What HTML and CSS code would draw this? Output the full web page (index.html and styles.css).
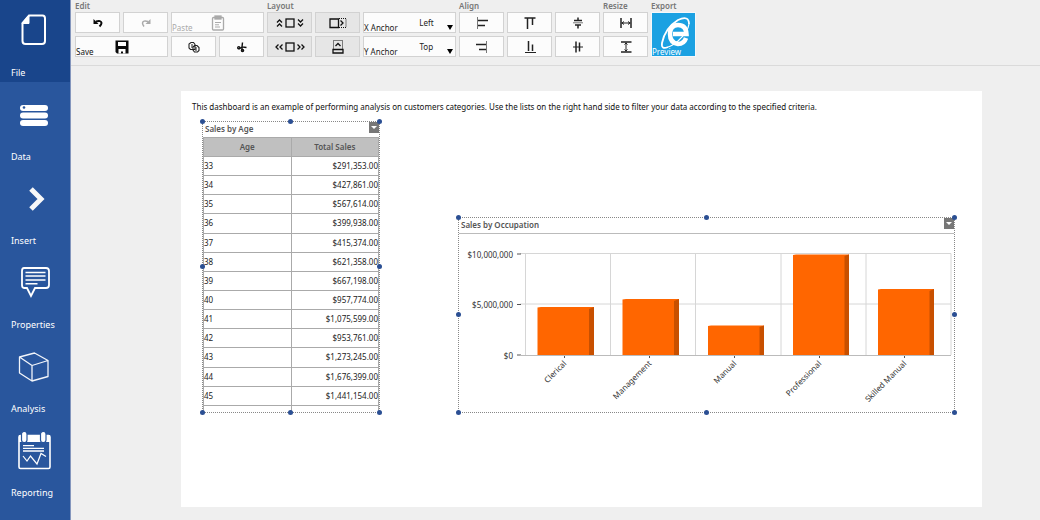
FILE: index.html
```html
<!DOCTYPE html>
<html lang="en">
<head>
<meta charset="utf-8">
<title>Dashboard designer</title>
<link rel="stylesheet" href="styles.css">
</head>
<body>
<div class="app">
  <nav class="sidebar">
    <button class="nav-item active"><svg class="nav-icon" viewBox="0 0 40 40" fill="none" stroke="#fff" stroke-width="2"><path d="M15 5.500h13.500q2.500 0 2.500 3v22.500q0 3-3 3H11.500q-3 0-3-3V13z"/><path d="M15 5v8.500H8z" fill="#fff" stroke-width="1"/></svg><span>File</span></button>
    <button class="nav-item"><svg class="nav-icon" viewBox="0 0 40 40" fill="#fff"><rect x="6" y="10" width="28" height="6" rx="3"/><rect x="6" y="17.500" width="28" height="6" rx="3"/><rect x="6" y="25" width="28" height="6" rx="3"/><circle cx="10" cy="12.500" r="1.300" fill="#29569d"/></svg><span>Data</span></button>
    <button class="nav-item"><svg class="nav-icon" viewBox="0 0 40 40" fill="none" stroke="#f8f8f8" stroke-width="5"><path d="M17 10l10 10-10 10"/></svg><span>Insert</span></button>
    <button class="nav-item"><svg class="nav-icon" viewBox="0 0 40 40" fill="none" stroke="#fff" stroke-width="1.800"><path d="M10 5h22q3 0 3 3v14q0 3-3 3h-11l-4 8-4-8h-3q-2 0-2-3V8q0-3 2-3z"/><path d="M11.500 9.500h20M11.500 13h20M11.500 17h20M11.500 20.800h12" stroke-width="1.600"/></svg><span>Properties</span></button>
    <button class="nav-item"><svg class="nav-icon" viewBox="0 0 40 40" fill="none" stroke="#f2f5fa" stroke-width="1.300" stroke-linejoin="round"><path d="M5.500 10l15-4L34 13.500v16L18 34 5.500 26zM5.500 10L18 18.500l16-5M18 18.500V34"/></svg><span>Analysis</span></button>
    <button class="nav-item"><svg class="nav-icon" viewBox="0 0 40 40" fill="none" stroke="#fff"><rect x="5" y="4.500" width="31" height="33" rx="1.500" stroke-width="1.600"/><path d="M5 4h31v7H5z" fill="#fff" stroke="none"/><g fill="#fff" stroke="#29569d" stroke-width="1.200"><rect x="7.500" y=".5" width="5.500" height="11" rx="2.500"/><rect x="26.500" y=".5" width="5.500" height="11" rx="2.500"/></g><path d="M9 14.700h11M9 17.300h21M9 20h21" stroke-width="1.300"/><path d="M9 25l4 5 3.500-5 6.500 8 4-10.500 5 3" stroke-width="1.200"/></svg><span>Reporting</span></button>
  </nav>
  <div class="workspace">
    <header class="toolbar">
      <section class="group edit"><h2>Edit</h2><div class="tools">
        <button class="tool" aria-label="Undo"><svg class="icon" viewBox="0 0 16 16" fill="none" stroke="#0a0a0a" stroke-width="2"><path d="M6 6.500q5-1.500 5.500 1.500 0 1.500-2 3.500"/><path d="M3.500 4v5h5z" fill="#0a0a0a" stroke="none"/></svg></button>
        <button class="tool" aria-label="Redo"><svg class="icon" viewBox="0 0 16 16" fill="none" stroke="#aaa" stroke-width="1.500"><path d="M10 6.500Q5 5 4.500 8q0 1.500 1.500 3.500"/><path d="M12.500 4v5h-5z" fill="#aaa" stroke="none"/></svg></button>
        <button class="tool wide" disabled><span class="caption">Paste</span><svg class="icon" viewBox="0 0 16 16" fill="none" stroke="#aaa" stroke-width="1.300"><rect x="2.500" y="2.500" width="11" height="12.500" rx="1"/><rect x="5" y="1" width="6" height="3" fill="#aaa"/><path d="M5 7.500h6M5 9.800h4M5 12h5" stroke-width="1"/></svg></button>
        <button class="tool wide"><span class="caption">Save</span><svg class="icon" viewBox="0 0 16 16"><path d="M1.500 1.500h13v13H3L1.500 13z" fill="#0a0a0a"/><path d="M4 3h8v4H4zM4.500 10h7v4.500H9V12.500H7v2H4.500z" fill="#fff"/></svg></button>
        <button class="tool" aria-label="Copy"><svg class="icon" viewBox="0 0 16 16" fill="#fff" stroke="#222" stroke-width="1.100"><path d="M5 3.500h2.500l1.500 2v5H4.500L3 9V5zM8.500 6.500h2.500l2 2v3l-1.500 1.500h-3L7 11V8z"/><path d="M5 6h2M5 8h2M9 9h2M9 11h2"/></svg></button>
        <button class="tool" aria-label="Cut"><svg class="icon" viewBox="0 0 16 16" fill="none" stroke="#111" stroke-width="1.400"><path d="M8.500 3.500L8 8l4.500.5M8 8L5 10M8 8v4"/><circle cx="4.800" cy="8.700" r="1.100"/><circle cx="8.500" cy="11.500" r="1.100"/></svg></button>
      </div></section>
      <section class="group layout"><h2>Layout</h2><div class="tools">
        <button class="tool dark" aria-label="Spread vertically"><svg class="icon broad" viewBox="0 0 32 16" fill="none" stroke="#111" stroke-width="1.300"><rect x="12" y="4" width="8" height="8"/><path d="M3 7.500L5.500 5 8 7.500M3 11.500L5.500 9 8 11.500M24 4.500L26.500 7 29 4.500M24 8.500l2.500 2.500L29 8.500"/></svg></button>
        <button class="tool dark" aria-label="Fill right"><svg class="icon broad" viewBox="0 0 32 16" fill="none" stroke="#111" stroke-width="1.300"><path d="M8 4h8.500v8.500H8z"/><path d="M17 3.500h7v9h-7" stroke-width="1" stroke-dasharray="1 1"/><path d="M18.500 5.500L21 8l-2.500 2.500"/></svg></button>
        <div class="field wide"><label for="xa">X Anchor</label><select id="xa"><option>Left</option><option>Right</option></select></div>
        <button class="tool dark" aria-label="Spread horizontally"><svg class="icon broad" viewBox="0 0 32 16" fill="none" stroke="#111" stroke-width="1.300"><rect x="12" y="4" width="8" height="8"/><path d="M4.500 5.500L2 8l2.500 2.500M8.500 5.500L6 8l2.500 2.500M23.500 5.500L26 8l-2.500 2.500M27.500 5.500L30 8l-2.500 2.500"/></svg></button>
        <button class="tool dark" aria-label="Fill up"><svg class="icon broad" viewBox="0 0 32 16" fill="none" stroke="#111" stroke-width="1.300"><path d="M11 10.500h10v3.500H11z"/><path d="M11.500 9.500v-8h9v8" stroke-width="1" stroke-dasharray="1 1"/><path d="M13.500 7L16 4.500 18.500 7"/></svg></button>
        <div class="field wide"><label for="ya">Y Anchor</label><select id="ya"><option>Top</option><option>Bottom</option></select></div>
      </div></section>
      <section class="group align"><h2>Align</h2><div class="tools">
        <button class="tool" aria-label="Align left"><svg class="icon" viewBox="0 0 16 16" fill="none" stroke="#222" stroke-width="1.500"><path d="M3.500 2v12" stroke="#777" stroke-width="1"/><path d="M4 5.500h10M4 10.500h7"/></svg></button>
        <button class="tool" aria-label="Align top"><svg class="icon" viewBox="0 0 16 16" fill="none" stroke="#222" stroke-width="1.500"><path d="M2.500 3h11"/><path d="M5.500 3v11M10.500 3v7"/></svg></button>
        <button class="tool" aria-label="Align middle"><svg class="icon" viewBox="0 0 16 16" fill="none" stroke="#222" stroke-width="1.500"><path d="M8 2.500v3M8 10v3.500M4 5.500h8M5 10h6"/><path d="M3 7.800h10" stroke-width="1" stroke="#777"/></svg></button>
        <button class="tool" aria-label="Align right"><svg class="icon" viewBox="0 0 16 16" fill="none" stroke="#222" stroke-width="1.500"><path d="M12.500 2v12" stroke="#777" stroke-width="1"/><path d="M2 5.500h10M5 10.500h7"/></svg></button>
        <button class="tool" aria-label="Align bottom"><svg class="icon" viewBox="0 0 16 16" fill="none" stroke="#222" stroke-width="1.500"><path d="M3 13.500h11" stroke-width="1"/><path d="M6.500 2v10M10.500 5.500V12"/></svg></button>
        <button class="tool" aria-label="Align centre"><svg class="icon" viewBox="0 0 16 16" fill="none" stroke="#222" stroke-width="1.500"><path d="M6 2.500v11M9.500 3.500v9"/><path d="M3 8h10" stroke-width="1"/></svg></button>
      </div></section>
      <section class="group resize"><h2>Resize</h2><div class="tools">
        <button class="tool" aria-label="Same width"><svg class="icon" viewBox="0 0 16 16" fill="none" stroke="#222" stroke-width="1.500"><path d="M3 3v10M13 3v10"/><path d="M3.500 8h9M6 6.500L4 8l2 1.500M10 6.500L12 8l-2 1.500" stroke-width="1"/></svg></button>
        <button class="tool" aria-label="Same height"><svg class="icon" viewBox="0 0 16 16" fill="none" stroke="#222" stroke-width="1.500"><path d="M3 3h10.500M3 13h10.500"/><path d="M8 3.500v9M6.500 5.500L8 4l1.500 1.500M6.500 10.500L8 12l1.500-1.500" stroke-width="1"/></svg></button>
      </div></section>
      <section class="group export"><h2>Export</h2><div class="tools">
        <button class="preview"><svg class="ie" viewBox="0 0 32 34" fill="none" stroke="#fff"><path d="M26 22q-2 6-8 6-8-1-8-10t8-9q8 0 8.500 9H13" stroke-width="4.500"/><path d="M8 31Q1 34 2 27 5 12 18 4 29-1 29 8" stroke-width="1.800"/><path d="M29 8Q28 16 18 25 12 30 8 31" stroke-width="1.200"/></svg><span class="caption">Preview</span></button>
      </div></section>
    </header>
    <main class="canvas">
      <p class="intro">This dashboard is an example of performing analysis on customers categories. Use the lists on the right hand side to filter your data according to the specified criteria.</p>
      <section class="widget age">
        <div class="clip">
          <div class="title"><h3>Sales by Age</h3></div>
          <table>
            <thead><tr><th>Age</th><th>Total Sales</th></tr></thead>
            <tbody>
              <tr><td>33</td><td>$291,353.00</td></tr><tr><td>34</td><td>$427,861.00</td></tr>
              <tr><td>35</td><td>$567,614.00</td></tr><tr><td>36</td><td>$399,938.00</td></tr>
              <tr><td>37</td><td>$415,374.00</td></tr><tr><td>38</td><td>$621,358.00</td></tr>
              <tr><td>39</td><td>$667,198.00</td></tr><tr><td>40</td><td>$957,774.00</td></tr>
              <tr><td>41</td><td>$1,075,599.00</td></tr><tr><td>42</td><td>$953,761.00</td></tr>
              <tr><td>43</td><td>$1,273,245.00</td></tr><tr><td>44</td><td>$1,676,399.00</td></tr>
              <tr><td>45</td><td>$1,441,154.00</td></tr><tr><td></td><td></td></tr>
            </tbody>
          </table>
        </div>
        <button class="menu" aria-label="Sales by Age menu"></button>
        <i class="dot t l"></i><i class="dot t c"></i><i class="dot t r"></i><i class="dot m l"></i><i class="dot m r"></i><i class="dot b l"></i><i class="dot b c"></i><i class="dot b r"></i>
      </section>
      <section class="widget occupation">
        <div class="clip">
          <div class="title"><h3>Sales by Occupation</h3></div>
          <svg class="chart" viewBox="459 234 495 178">
            <path class="grid" d="M520 253.500H951M520 304H951M525.500 253.500V355M610.500 253.500V355M695.500 253.500V355M781 253.500V355M866 253.500V355M951 253.500V355"/>
            <path class="tick" d="M517 254h4M517 304.500h4M517 355h4M564.500 355v3M649.500 355v3M734.500 355v3M819.500 355v3M904.500 355v3"/>
            <g class="bar"><path d="M537.500 355V307.500L541 307h53v48z"/><path d="M622.500 355V299.500L626 299h53v56z"/><path d="M708 355V326l3-.5h53V355z"/><path d="M793 355V255l3-.5h53V355z"/><path d="M878 355V289.500L881 289h53v66z"/></g>
            <g class="side"><path d="M589 309l5-2v48h-5z"/><path d="M674 301l5-2v56h-5z"/><path d="M759.500 327l4.500-1.500V355h-4.500z"/><path d="M844.500 256l4.500-1.500V355h-4.500z"/><path d="M929.500 291l4.500-2v66h-4.500z"/></g>
            <path class="base" d="M520 355.500H951"/>
            <g class="ylabel"><text x="513" y="258">$10,000,000</text><text x="513" y="308">$5,000,000</text><text x="513" y="359">$0</text></g>
            <g class="xlabel"><text transform="translate(567 364) rotate(-45)">Clerical</text><text transform="translate(652 364) rotate(-45)">Management</text><text transform="translate(737 364) rotate(-45)">Manual</text><text transform="translate(822 364) rotate(-45)">Professional</text><text transform="translate(907 364) rotate(-45)">Skilled Manual</text></g>
          </svg>
        </div>
        <button class="menu" aria-label="Sales by Occupation menu"></button>
        <i class="dot t l"></i><i class="dot t c"></i><i class="dot t r"></i><i class="dot m l"></i><i class="dot m r"></i><i class="dot b l"></i><i class="dot b c"></i><i class="dot b r"></i>
      </section>
    </main>
  </div>
</div>
</body>
</html>
```
FILE: styles.css
```css
* { box-sizing: border-box; }
body { margin: 0; background: #efefef; color: #222; font: 9px/12px "Noto Sans", "Open Sans", sans-serif; }
button, select { font: inherit; color: inherit; }
h2, h3, p { margin: 0; }
.app { display: flex; min-height: 100vh; }

.sidebar { display: flex; flex-direction: column; flex: 0 0 71px; background: #29569d; border-right: 1px solid #8496bd; }
.nav-item { display: flex; flex-direction: column; justify-content: space-between; align-items: flex-start; height: 84px; padding: 11px 0 5px 11px; border: 0; background: none; color: #fff; }
.nav-item.active { height: 82px; margin-bottom: 2px; padding: 10px 0 3px 11px; background: #19458b; }
.nav-icon { width: 40px; height: 40px; margin-left: 3px; }

.workspace { display: flex; flex-direction: column; flex: 1; min-width: 0; }
.toolbar { display: flex; gap: 3px; padding: 0 4px 8px; border-bottom: 1px solid #dadada; }
.group h2 { height: 12px; color: #777; font-size: 8px; font-weight: 600; line-height: 12px; }
.tools { display: grid; grid-auto-rows: 21px; grid-template-columns: repeat(var(--cols), 45px); gap: 3px; }
.edit, .layout { --cols: 4; }
.align { --cols: 3; }
.resize, .export { --cols: 1; }
.tool, .field { position: relative; display: flex; align-items: center; justify-content: center; padding: 0; border: 1px solid #d2d2d2; background: #fcfcfc; }
.tool.dark { background: #e6e6e6; }
.wide { grid-column: span 2; }
.icon { width: 16px; height: 16px; }
.icon.broad { width: 32px; }
.caption { position: absolute; left: 0; bottom: -1px; font-size: 8px; line-height: 10px; color: #111; }
.tool:disabled .caption { color: #aaa; }
.field label { align-self: flex-end; font-size: 8px; line-height: 9px; color: #222; white-space: nowrap; }
.field select { flex: 1; min-width: 0; height: 19px; padding: 0; border: 0; background: none; appearance: none; font-size: 8px; text-align-last: center; }
.field::after { content: ""; position: absolute; right: 2px; bottom: 2px; border: 3px solid transparent; border-top: 5px solid #000; border-bottom: 0; pointer-events: none; }
.preview { position: relative; grid-row: span 2; display: flex; justify-content: flex-end; padding: 3px; border: 1px solid #f4f8fb; background: #1ba1e2; }
.ie { width: 32px; height: 34px; }
.preview .caption { color: #fff; }

.canvas { position: relative; flex: 1; margin: 25px 58px 13px 110px; padding: 9px 11px; background: #fff; }
.intro { color: #111; font-size: 8px; line-height: 14px; }
.widget { position: absolute; border: 1px dotted #888; }
.age { left: 21px; top: 30px; width: 178px; height: 292px; }
.occupation { left: 277px; top: 126px; width: 497px; height: 196px; }
.clip { height: 100%; overflow: hidden; }
.title { height: 16px; padding-left: 2px; }
.title h3 { color: #555; font-size: 8px; font-weight: 600; line-height: 14px; }
.age .title { height: 15px; }
table { width: 100%; height: 288px; border-collapse: collapse; font-size: 8px; line-height: 12px; }
tr { height: 19px; }
th, td { width: 50%; padding: 0; border: 1px solid #aaa; }
th { background: #c0c0c0; color: #555; font-weight: 600; }
td:first-child { text-align: left; }
td:last-child { text-align: right; }
.occupation .title { border-bottom: 1px solid #bbb; }
.chart { display: block; width: 100%; }
.grid { fill: none; stroke: #d6d6d6; }
.base { stroke: #bbb; }
.tick { fill: none; stroke: #555; }
.bar { fill: #f60; }
.side { fill: #c85000; }
.chart text { fill: #333; font-size: 8px; text-anchor: end; }
.menu { position: absolute; right: 0; top: 0; display: flex; align-items: center; justify-content: center; width: 10px; height: 11px; padding: 0; border: 0; background: #777; }
.menu::after { content: ""; border: 3px solid transparent; border-top-color: #fff; border-bottom: 0; }
.dot { position: absolute; width: 5px; height: 5px; border-radius: 50%; background: #2b4f93; }
.l { left: -3px; } .c { left: calc(50% - 3px); } .r { right: -3px; }
.t { top: -3px; } .m { top: calc(50% - 3px); } .b { bottom: -3px; }
```
